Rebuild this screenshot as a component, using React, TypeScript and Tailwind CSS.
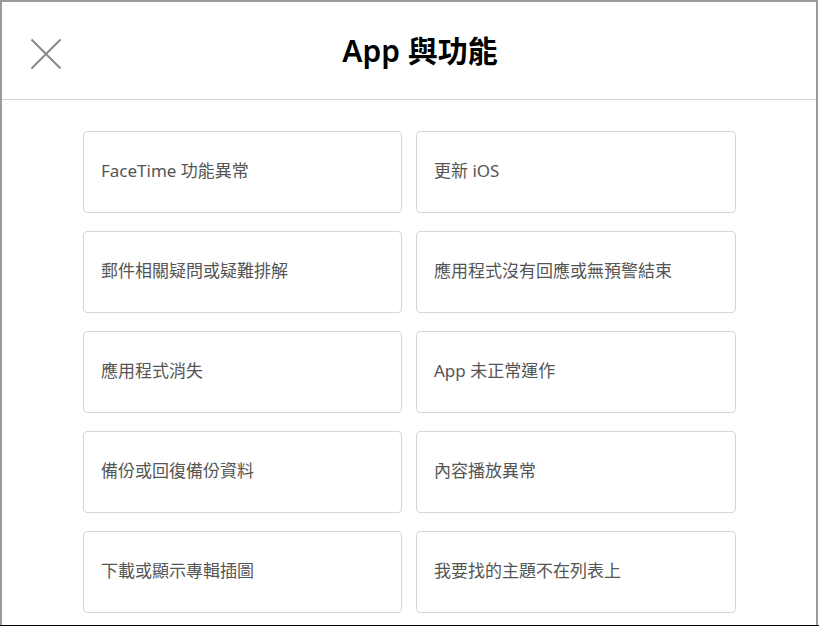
import React from "react";

const items = [
  "FaceTime 功能異常",
  "更新 iOS",
  "郵件相關疑問或疑難排解",
  "應用程式沒有回應或無預警結束",
  "應用程式消失",
  "App 未正常運作",
  "備份或回復備份資料",
  "內容播放異常",
  "下載或顯示專輯插圖",
  "我要找的主題不在列表上",
];

export default function App() {
  return (
    <div
      className="w-[819px] h-[626px] overflow-hidden bg-white flex flex-col"
      style={{ fontFamily: '"Noto Sans", "Noto Sans CJK TC", sans-serif' }}
    >
      <div className="flex-1 flex flex-col border-t-2 border-l-2 border-r-2 border-[#9a9a9a] mr-px min-h-0">
        <div className="h-[98px] shrink-0 flex items-center relative border-b border-[#d4d4d4]">
          <button className="absolute left-[28px] top-[36px] w-[32px] h-[32px] flex items-center justify-center">
            <svg width="32" height="32" viewBox="0 0 32 32">
              <path d="M1.5 1.5 L30.5 30.5 M30.5 1.5 L1.5 30.5" stroke="#888" strokeWidth="2" fill="none" />
            </svg>
          </button>
          <h1 className="w-full text-center pl-[22px] text-[30px] font-semibold text-black leading-none">
            App 與功能
          </h1>
        </div>
        <div className="pt-[31px] pl-[81px]">
          <div className="grid grid-cols-[319px_320px] gap-x-[14px] gap-y-[18px] w-[653px]">
            {items.map((t) => (
              <div
                key={t}
                className="h-[82px] border border-[#d6d6d6] rounded-[4px] flex items-center pl-[17px] pb-[2px] text-[17px] text-[#555]"
              >
                {t}
              </div>
            ))}
          </div>
        </div>
      </div>
      <div className="h-px bg-black shrink-0" />
    </div>
  );
}
